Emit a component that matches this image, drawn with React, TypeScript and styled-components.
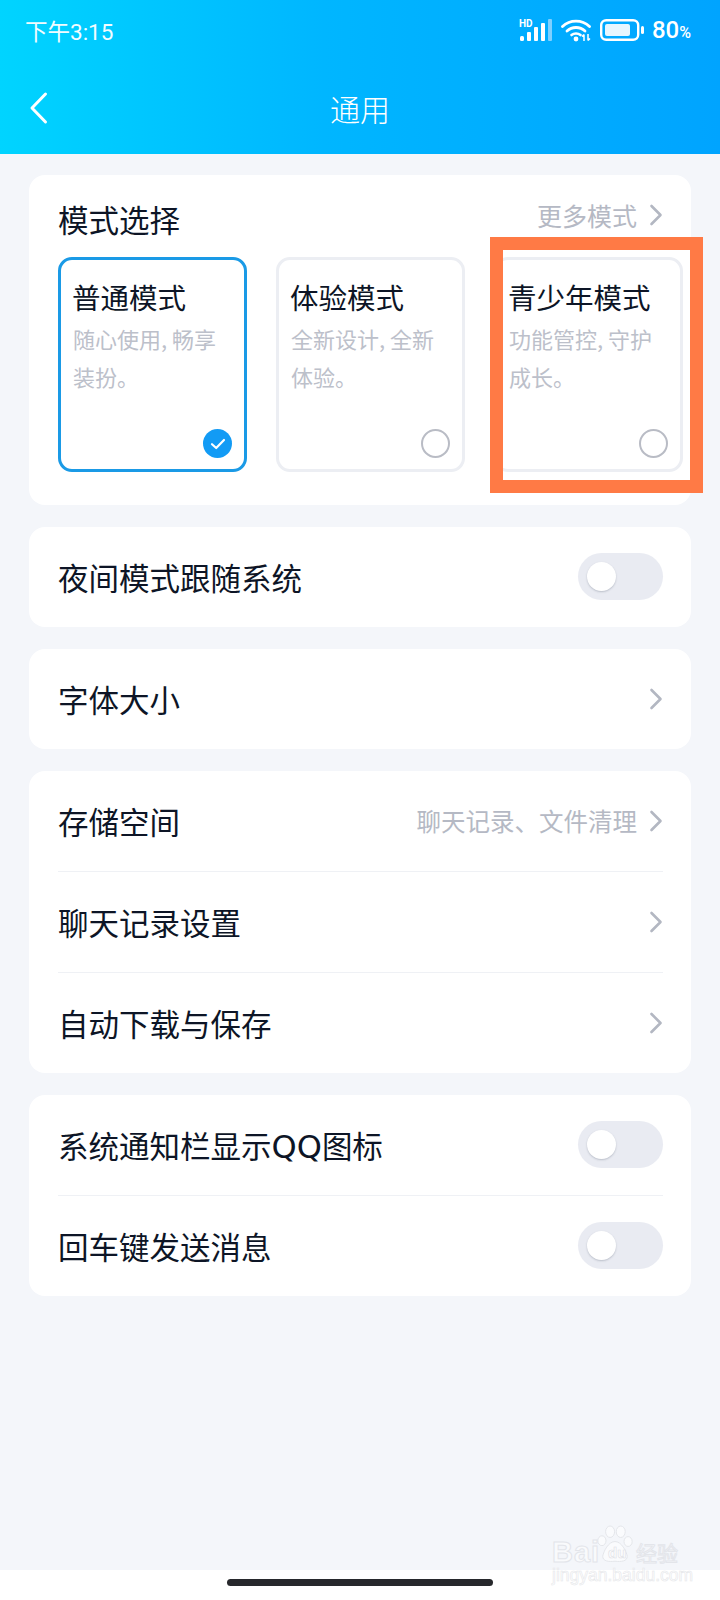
import { createGlobalStyle, styled } from "styled-components"

const GlobalStyle = createGlobalStyle`
  html, body {
    margin: 0;
    padding: 0;
    background: #f4f6fa;
  }
  * {
    box-sizing: border-box;
  }
`

const Page = styled.div`
  position: relative;
  width: 720px;
  height: 1600px;
  display: flex;
  flex-direction: column;
  overflow: hidden;
  background: #f4f6fa;
  color: #0d1526;
  font-family: "Noto Sans CJK SC", "Noto Sans", sans-serif;
`

const Header = styled.header`
  height: 154px;
  flex: none;
  display: flex;
  flex-direction: column;
  color: #fff;
  background: linear-gradient(90deg, #00d4ff 0%, #00b6ff 45%, #00a4ff 100%);
`

const StatusBar = styled.div`
  height: 62px;
  flex: none;
  display: flex;
  align-items: center;
  justify-content: space-between;
  padding: 0 29px 2px 25px;
`

const Clock = styled.span`
  font-family: Roboto, "Noto Sans CJK SC", sans-serif;
  font-size: 22.5px;
  color: #f2fcff;
`

const StatusIcons = styled.div`
  display: flex;
  align-items: center;
  gap: 8px;
`

const BatteryText = styled.span`
  font-family: Roboto, sans-serif;
  font-size: 24px;
  font-weight: 500;
  small {
    font-size: 16px;
  }
`

const NavBar = styled.div`
  flex: 1;
  display: grid;
  grid-template-columns: 80px 1fr 80px;
  align-items: center;
`

const BackIcon = styled.svg`
  width: 20px;
  height: 34px;
  margin-left: 29px;
`

const NavTitle = styled.div`
  text-align: center;
  font-size: 30px;
  line-height: 40px;
  font-weight: 300;
`

const Content = styled.main`
  flex: 1;
  display: flex;
  flex-direction: column;
  gap: 22px;
  padding: 21px 29px 0 29px;
`

const Card = styled.section`
  background: #fff;
  border-radius: 16px;
  display: flex;
  flex-direction: column;
`

const ModeCard = styled(Card)`
  height: 330px;
  padding: 0 9px 0 29px;
`

const ModeHeader = styled.div`
  height: 82px;
  flex: none;
  display: flex;
  justify-content: space-between;
  padding-right: 19px;
`

const ModeTitle = styled.div`
  font-size: 30.5px;
  line-height: 40px;
  margin-top: 24px;
`

const MoreLink = styled.div`
  display: flex;
  align-items: center;
  gap: 12px;
  height: 36px;
  margin-top: 22px;
  font-size: 25px;
  color: #b5b9c4;
`

const ModeGrid = styled.div`
  display: grid;
  grid-template-columns: repeat(3, 189px);
  gap: 29px;
`

const ModeOption = styled.div<{ $active?: boolean }>`
  height: 215px;
  display: flex;
  flex-direction: column;
  padding: 18px 12px 11px 12px;
  border: 3px solid ${p => (p.$active ? "#1a9ae6" : "#eceef3")};
  border-radius: 14px;
`

const OptionTitle = styled.div`
  font-size: 28.5px;
  line-height: 38px;
  margin-left: -1px;
  white-space: nowrap;
`

const OptionDesc = styled.div`
  margin-top: 4px;
  font-size: 22px;
  line-height: 37.5px;
  color: #bcc0ca;
  white-space: nowrap;
`

const Selector = styled.div<{ $active?: boolean }>`
  width: 29px;
  height: 29px;
  margin-top: auto;
  align-self: flex-end;
  border-radius: 50%;
  display: flex;
  align-items: center;
  justify-content: center;
  border: ${p => (p.$active ? "none" : "2px solid #b9bcc5")};
  background: ${p => (p.$active ? "#129bf5" : "#fff")};
`

const Row = styled.div`
  height: 100px;
  display: flex;
  align-items: center;
  justify-content: space-between;
  padding-bottom: 1px;
  font-size: 30.5px;
`

const WideLatin = styled.span`
  font-family: "DejaVu Sans", sans-serif;
  font-size: 32px;
  line-height: 1;
`

const RowGroup = styled(Card)`
  padding: 0 28px 0 29px;
`

const Divider = styled.div`
  height: 1px;
  background: #eff1f5;
`

const RowHint = styled.div`
  display: flex;
  align-items: center;
  gap: 12px;
  font-size: 24.5px;
  color: #b5b9c4;
`

const Toggle = styled.div`
  width: 85px;
  height: 47px;
  border-radius: 24px;
  background: #e9ebf2;
  display: flex;
  align-items: center;
  padding-left: 9px;
`

const Knob = styled.div`
  width: 29px;
  height: 29px;
  border-radius: 50%;
  background: #fff;
  box-shadow: 0 1px 2px rgba(80, 90, 110, 0.3);
`

const HomeBar = styled.div`
  height: 30px;
  flex: none;
  background: #fff;
  display: flex;
  justify-content: center;
  padding-top: 9px;
`

const HomeIndicator = styled.div`
  width: 266px;
  height: 7px;
  border-radius: 4px;
  background: #27282c;
`

const Highlight = styled.div`
  position: absolute;
  left: 490px;
  top: 237px;
  width: 213px;
  height: 256px;
  border: 13px solid #ff7a45;
  pointer-events: none;
`

const Watermark = styled.div`
  position: absolute;
  left: 552px;
  top: 1520px;
  width: 134px;
  height: 66px;
`

const WatermarkBrand = styled.div`
  position: absolute;
  left: 0;
  top: 16px;
  font-family: "Liberation Sans", sans-serif;
  font-size: 29px;
  line-height: 32px;
  font-weight: 700;
  letter-spacing: 1px;
  color: rgba(255, 255, 255, 0.55);
  -webkit-text-stroke: 1px #e3e5ea;
`

const WatermarkDu = styled.div`
  position: absolute;
  left: 56px;
  top: 24px;
  font-family: "Liberation Sans", sans-serif;
  font-size: 15px;
  line-height: 18px;
  font-weight: 700;
  color: rgba(255, 255, 255, 0.7);
  -webkit-text-stroke: 0.6px #dfe1e6;
`

const WatermarkLabel = styled.div`
  position: absolute;
  left: 84px;
  top: 17px;
  font-size: 21px;
  line-height: 30px;
  white-space: nowrap;
  color: rgba(255, 255, 255, 0.55);
  -webkit-text-stroke: 1px #e3e5ea;
`

const WatermarkUrl = styled.div`
  position: absolute;
  left: 0;
  top: 45px;
  font-family: "Liberation Sans", sans-serif;
  font-size: 17.5px;
  line-height: 20px;
  white-space: nowrap;
  color: rgba(255, 255, 255, 0.6);
  -webkit-text-stroke: 0.6px #e6e7ea;
`

const WatermarkPaw = styled.svg`
  position: absolute;
  left: 45px;
  top: 3px;
  width: 36px;
  height: 42px;
`

const Chevron = ({ color = "#b3b7c2" }: { color?: string }) => (
  <svg width="14" height="22" viewBox="0 0 14 22" fill="none">
    <path d="M2.5 2 L11.5 11 L2.5 20" stroke={color} strokeWidth="2.6" strokeLinecap="round" strokeLinejoin="round" />
  </svg>
)

const SignalIcon = () => (
  <svg width="34" height="24" viewBox="0 0 34 24" fill="#fff">
    <text x="0" y="9" fontFamily="Roboto, sans-serif" fontSize="10" fontWeight="700">HD</text>
    <rect x="1" y="18" width="4" height="5" rx="1.5" />
    <rect x="8" y="14" width="4" height="9" rx="1" />
    <rect x="15" y="9" width="4" height="14" rx="1" />
    <rect x="22" y="5" width="4" height="18" rx="1" />
    <rect x="29" y="1" width="4" height="22" rx="1" fill="#7fd0ff" />
  </svg>
)

const WifiIcon = () => (
  <svg width="31" height="24" viewBox="0 0 31 24" fill="none">
    <path d="M1.5 8.5 C 9 1.2 21 1.2 28.5 8.5" stroke="#fff" strokeWidth="2.8" strokeLinecap="round" />
    <path d="M6 13 C 11 8.3 19 8.3 24 13" stroke="#fff" strokeWidth="2.8" strokeLinecap="round" />
    <path d="M10.5 17 C 13 15 17 15 19.5 17" stroke="#fff" strokeWidth="2.6" strokeLinecap="round" />
    <circle cx="15" cy="21" r="2.4" fill="#fff" />
    <path d="M23 23 V16.5 M21 18.5 L23 16.5 M27 16 V22.5 M27 22.5 L29 20.5" stroke="#fff" strokeWidth="1.5" />
  </svg>
)

const BatteryIcon = () => (
  <svg width="44" height="22" viewBox="0 0 44 22" fill="none">
    <rect x="1.2" y="1.2" width="37" height="19.6" rx="5" stroke="#fff" strokeWidth="2.4" />
    <rect x="5" y="5" width="25" height="12" rx="2" fill="#e6f6ff" />
    <rect x="41" y="7" width="3" height="8" rx="1.5" fill="#fff" />
  </svg>
)

const CheckMark = () => (
  <svg width="16" height="12" viewBox="0 0 16 12" fill="none">
    <path d="M2 6.2 L6.2 10 L14 2" stroke="#fff" strokeWidth="2.2" strokeLinecap="round" strokeLinejoin="round" />
  </svg>
)

const modes = [
  { title: "普通模式", lines: ["随心使用, 畅享", "装扮。"], active: true },
  { title: "体验模式", lines: ["全新设计, 全新", "体验。"] },
  { title: "青少年模式", lines: ["功能管控, 守护", "成长。"] },
]

export default function App() {
  return (
    <Page>
      <GlobalStyle />
      <Header>
        <StatusBar>
          <Clock>下午3:15</Clock>
          <StatusIcons>
            <SignalIcon />
            <WifiIcon />
            <BatteryIcon />
            <BatteryText>80<small>%</small></BatteryText>
          </StatusIcons>
        </StatusBar>
        <NavBar>
          <BackIcon viewBox="0 0 20 34" fill="none">
            <path d="M16.5 3 L3 17 L16.5 31" stroke="#fff" strokeWidth="3" strokeLinecap="round" strokeLinejoin="round" />
          </BackIcon>
          <NavTitle>通用</NavTitle>
        </NavBar>
      </Header>

      <Content>
        <ModeCard>
          <ModeHeader>
            <ModeTitle>模式选择</ModeTitle>
            <MoreLink>更多模式<Chevron /></MoreLink>
          </ModeHeader>
          <ModeGrid>
            {modes.map(mode => (
              <ModeOption key={mode.title} $active={mode.active}>
                <OptionTitle>{mode.title}</OptionTitle>
                <OptionDesc>{mode.lines[0]}<br />{mode.lines[1]}</OptionDesc>
                <Selector $active={mode.active}>{mode.active && <CheckMark />}</Selector>
              </ModeOption>
            ))}
          </ModeGrid>
        </ModeCard>

        <RowGroup>
          <Row>夜间模式跟随系统<Toggle><Knob /></Toggle></Row>
        </RowGroup>

        <RowGroup>
          <Row>字体大小<Chevron /></Row>
        </RowGroup>

        <RowGroup>
          <Row>存储空间<RowHint>聊天记录、文件清理<Chevron /></RowHint></Row>
          <Divider />
          <Row>聊天记录设置<Chevron /></Row>
          <Divider />
          <Row>自动下载与保存<Chevron /></Row>
        </RowGroup>

        <RowGroup>
          <Row><span>系统通知栏显示<WideLatin>QQ</WideLatin>图标</span><Toggle><Knob /></Toggle></Row>
          <Divider />
          <Row>回车键发送消息<Toggle><Knob /></Toggle></Row>
        </RowGroup>
      </Content>

      <HomeBar>
        <HomeIndicator />
      </HomeBar>

      <Highlight />

      <Watermark>
        <WatermarkPaw viewBox="0 0 44 46" fill="rgba(255,255,255,0.55)" stroke="#e3e5ea" strokeWidth="1.2">
          <ellipse cx="6" cy="19" rx="5" ry="6" />
          <ellipse cx="16" cy="8" rx="5.5" ry="7" />
          <ellipse cx="29" cy="8" rx="5.5" ry="7" />
          <ellipse cx="38" cy="20" rx="5" ry="6" />
          <path d="M22 20 C 14 20 8 32 7 38 C 7 44 14 45 22 44 C 30 45 37 44 37 38 C 36 32 30 20 22 20 Z" />
        </WatermarkPaw>
        <WatermarkBrand>Bai</WatermarkBrand>
        <WatermarkDu>du</WatermarkDu>
        <WatermarkLabel>经验</WatermarkLabel>
        <WatermarkUrl>jingyan.baidu.com</WatermarkUrl>
      </Watermark>
    </Page>
  )
}
